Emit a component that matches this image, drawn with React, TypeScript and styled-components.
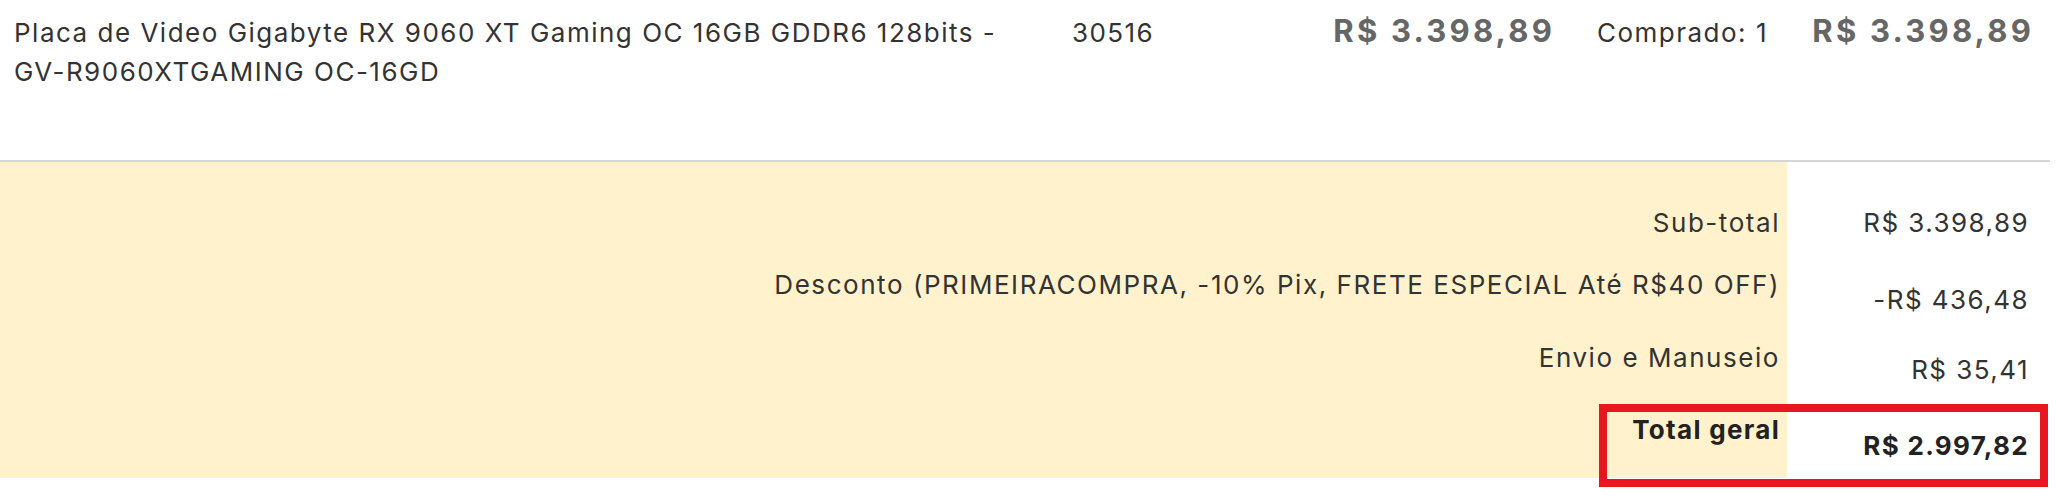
import React from "react";
import styled, { createGlobalStyle } from "styled-components";

const GlobalStyle = createGlobalStyle`
  *, *::before, *::after { box-sizing: border-box; }
  html, body { margin: 0; padding: 0; background: #ffffff; }
  body { font-family: Inter, "Noto Sans", "Liberation Sans", sans-serif; color: #333333; }
`;

const Page = styled.div`
  width: 2050px;
  min-height: 500px;
  display: flex;
  flex-direction: column;
`;

const ItemRow = styled.div`
  display: flex;
  align-items: baseline;
  height: 162px;
  padding-top: 11px;
  border-bottom: 2px solid #d6d6d6;
`;

const NameCell = styled.div`
  width: 1072px;
  padding-left: 14px;
  padding-right: 20px;
  font-size: 26px;
  letter-spacing: 1.5px;
  line-height: 39px;
  color: #333333;
`;

const NoWrap = styled.span`
  white-space: nowrap;
`;

const SkuCell = styled.div`
  width: 228px;
  font-size: 26px;
  letter-spacing: 1.4px;
  line-height: 39px;
  color: #333333;
`;

const PriceCell = styled.div<{ $w: number }>`
  width: ${(p) => p.$w}px;
  text-align: right;
  font-size: 31px;
  font-weight: 700;
  letter-spacing: 3.2px;
  line-height: 39px;
  color: #666666;
  white-space: nowrap;
`;

const QtyCell = styled.div`
  width: 213px;
  text-align: right;
  font-size: 26px;
  letter-spacing: 1.5px;
  line-height: 39px;
  color: #333333;
  white-space: nowrap;
`;

const Totals = styled.div`
  display: flex;
  flex-direction: column;
`;

const TotalRow = styled.div<{ $h: number }>`
  position: relative;
  display: flex;
  height: ${(p) => p.$h}px;
`;

const Mark = styled.div<{ $top: number; $strong?: boolean }>`
  width: 1787px;
  background: #fff2cc;
  padding-top: ${(p) => p.$top}px;
  padding-right: 7px;
  text-align: right;
  font-size: 26px;
  letter-spacing: ${(p) => (p.$strong ? 1.3 : 1.55)}px;
  line-height: 30px;
  font-weight: ${(p) => (p.$strong ? 700 : 400)};
  color: ${(p) => (p.$strong ? "#222222" : "#333333")};
  white-space: nowrap;
`;

const Amount = styled.div<{ $top: number; $strong?: boolean }>`
  flex: 1;
  padding-top: ${(p) => p.$top}px;
  padding-right: 21px;
  text-align: right;
  font-size: 26px;
  letter-spacing: ${(p) => (p.$strong ? 1.3 : 1.45)}px;
  line-height: 30px;
  font-weight: ${(p) => (p.$strong ? 700 : 400)};
  color: ${(p) => (p.$strong ? "#222222" : "#333333")};
  white-space: nowrap;
`;

const Highlight = styled.div`
  position: absolute;
  left: 1599px;
  width: 449px;
  top: 4px;
  height: 83px;
  border: 8px solid #e8161f;
  pointer-events: none;
`;

type Line = {
  label: string;
  value: string;
  h: number;
  lt: number;
  vt: number;
  strong?: boolean;
};

const lines: Line[] = [
  { label: "Sub-total", value: "R$ 3.398,89", h: 93, lt: 46, vt: 46 },
  {
    label: "Desconto (PRIMEIRACOMPRA, -10% Pix, FRETE ESPECIAL Até R$40 OFF)",
    value: "-R$ 436,48",
    h: 75,
    lt: 15,
    vt: 30,
  },
  { label: "Envio e Manuseio", value: "R$ 35,41", h: 70, lt: 13, vt: 25 },
  { label: "Total geral", value: "R$ 2.997,82", h: 78, lt: 15, vt: 31, strong: true },
];

export default function App() {
  return (
    <>
      <GlobalStyle />
      <Page>
        <ItemRow>
          <NameCell>
            Placa de Video Gigabyte RX 9060 XT Gaming OC 16GB GDDR6 128bits -{" "}
            <NoWrap>GV-R9060XTGAMING</NoWrap> OC-16GD
          </NameCell>
          <SkuCell>30516</SkuCell>
          <PriceCell $w={255}>R$ 3.398,89</PriceCell>
          <QtyCell>Comprado: 1</QtyCell>
          <PriceCell $w={266}>R$ 3.398,89</PriceCell>
        </ItemRow>
        <Totals>
          {lines.map((l) => (
            <TotalRow key={l.label} $h={l.h}>
              <Mark $top={l.lt} $strong={l.strong}>
                {l.label}
              </Mark>
              <Amount $top={l.vt} $strong={l.strong}>
                {l.value}
              </Amount>
              {l.strong && <Highlight />}
            </TotalRow>
          ))}
        </Totals>
      </Page>
    </>
  );
}
